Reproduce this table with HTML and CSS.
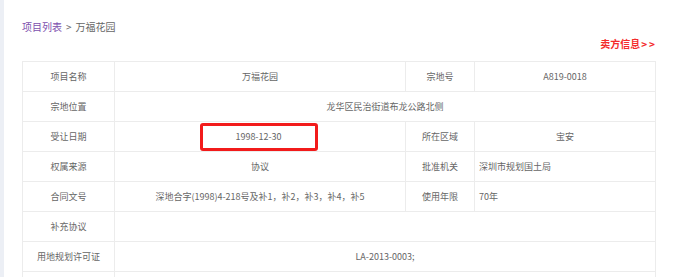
FILE: index.html
```html
<!DOCTYPE html>
<html lang="zh-CN">
<head>
<meta charset="utf-8">
<title>万福花园</title>
<link rel="stylesheet" href="styles.css">
</head>
<body>
<div class="page">
  <div class="side"></div>
  <div class="main">
    <div class="crumb"><a class="crumb-link">项目列表</a><span class="crumb-sep">&gt;</span><span>万福花园</span></div>
    <div class="seller"><span class="seller-text">卖方信息<span class="arrows">&gt;&gt;</span></span></div>
    <table class="info">
      <colgroup>
        <col class="c1"><col class="c2"><col class="c3"><col class="c4">
      </colgroup>
      <tr><td>项目名称</td><td>万福花园</td><td>宗地号</td><td>A819-0018</td></tr>
      <tr><td>宗地位置</td><td colspan="3">龙华区民治街道布龙公路北侧</td></tr>
      <tr><td>受让日期</td><td><span class="mark">1998-12-30</span></td><td>所在区域</td><td>宝安</td></tr>
      <tr><td>权属来源</td><td>协议</td><td>批准机关</td><td class="left">深圳市规划国土局</td></tr>
      <tr><td>合同文号</td><td>深地合字(1998)4-218号及补1，补2，补3，补4，补5</td><td>使用年限</td><td class="left">70年</td></tr>
      <tr><td>补充协议</td><td colspan="3"></td></tr>
      <tr><td>用地规划许可证</td><td colspan="3">LA-2013-0003;</td></tr>
      <tr><td></td><td colspan="3"></td></tr>
    </table>
  </div>
</div>
</body>
</html>
```

FILE: styles.css
```css
html, body {
  margin: 0;
  padding: 0;
  background: #fff;
  font-family: "Microsoft YaHei", "Noto Sans CJK SC", "Noto Sans", sans-serif;
  color: #666;
}
.page {
  display: flex;
  height: 277px;
  overflow: hidden;
}
.side {
  width: 4px;
  flex: none;
  background: #eceff5;
}
.main {
  flex: 1;
  padding: 20px 37px 0 18px;
}
.crumb {
  font-size: 10px;
  line-height: 14px;
  color: #666;
  display: flex;
  gap: 4px;
}
.crumb-link {
  color: #7d4fae;
}
.seller {
  margin-top: 3px;
  display: flex;
  justify-content: flex-end;
  font-size: 10px;
  line-height: 14px;
  font-weight: bold;
  color: #f42c2c;
  padding-right: 1px;
  white-space: nowrap;
}
.seller-text {
  white-space: nowrap;
}
.arrows {
  letter-spacing: 2px;
  margin-left: 1px;
  margin-right: -2px;
}
.info {
  margin-top: 10px;
  width: 633px;
  border-collapse: collapse;
  table-layout: fixed;
  font-size: 9px;
  color: #666;
}
.c1 { width: 92px; }
.c2 { width: 291px; }
.c3 { width: 69px; }
.c4 { width: 181px; }
.info td {
  border: 1px solid #ececec;
  height: 29px;
  padding: 0 4px;
  text-align: center;
  vertical-align: middle;
  white-space: nowrap;
}
.info td.left {
  text-align: left;
}
.mark {
  display: inline-flex;
  align-items: center;
  justify-content: center;
  box-sizing: border-box;
  width: 118px;
  height: 28px;
  border: 3px solid #f21b1b;
  border-radius: 3px;
  vertical-align: middle;
  margin: 0 0 0 -3px;
}
```
